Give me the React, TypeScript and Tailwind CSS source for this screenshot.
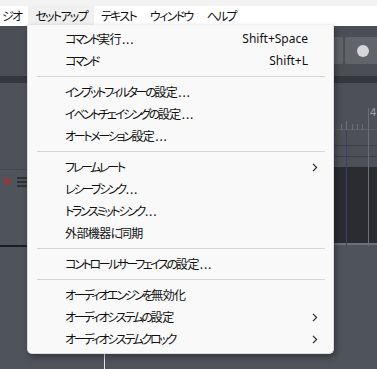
import React from "react";

const JP = 'font-["Yu_Gothic_UI","Noto_Sans_CJK_JP",sans-serif] [font-feature-settings:"palt"]';

type Item =
  | { kind: "item"; label: string; shortcut?: string; sub?: boolean }
  | { kind: "sep" };

const MENU: Item[] = [
  { kind: "item", label: "コマンド実行...", shortcut: "Shift+Space" },
  { kind: "item", label: "コマンド", shortcut: "Shift+L" },
  { kind: "sep" },
  { kind: "item", label: "インプットフィルターの設定..." },
  { kind: "item", label: "イベントチェイシングの設定..." },
  { kind: "item", label: "オートメーション設定..." },
  { kind: "sep" },
  { kind: "item", label: "フレームレート", sub: true },
  { kind: "item", label: "レシーブシンク..." },
  { kind: "item", label: "トランスミットシンク..." },
  { kind: "item", label: "外部機器に同期" },
  { kind: "sep" },
  { kind: "item", label: "コントロールサーフェイスの設定..." },
  { kind: "sep" },
  { kind: "item", label: "オーディオエンジンを無効化" },
  { kind: "item", label: "オーディオシステムの設定", sub: true },
  { kind: "item", label: "オーディオシステムクロック", sub: true },
];

const TOP = ["ジオ", "セットアップ", "テキスト", "ウィンドウ", "ヘルプ"];

// kana are set tight, kanji near full width, dots a little open
function Label({ text, kana }: { text: string; kana: string }) {
  const runs = text.match(/[\u4e00-\u9fff]+|\.+|[^\u4e00-\u9fff.]+/g) ?? [];
  return (
    <>
      {runs.map((r, i) => {
        const cls = /[\u4e00-\u9fff]/.test(r)
          ? "tracking-[-0.6px]"
          : r.startsWith(".")
          ? "tracking-[0.8px] pl-[1px]"
          : kana;
        return (
          <span key={i} className={cls}>
            {r}
          </span>
        );
      })}
    </>
  );
}

function Chevron() {
  return (
    <svg width="6" height="9" viewBox="0 0 6 9" className="block">
      <polyline points="1,0.8 4.6,4.5 1,8.2" fill="none" stroke="#2b2b2b" strokeWidth="1.2" />
    </svg>
  );
}

export default function App() {
  return (
    <div className="relative w-[377px] h-[369px] overflow-hidden bg-[#4f535a]">
      {/* menu bar */}
      <div className="h-[26px] bg-white border-t-[6px] border-[#f3f3f3] flex items-stretch">
        {TOP.map((t, i) => (
          <div
            key={t}
            className={`${JP} text-[12px] text-[#111] flex items-center px-[7px] ${i === 0 ? "ml-[-5px]" : ""} ${
              i === 1 ? "bg-[#f0f0f0]" : ""
            }`}
          >
            <span className="tracking-[-1.7px]">{t}</span>
          </div>
        ))}
      </div>

      {/* toolbar */}
      <div className="h-[50px] bg-[#4b4e55] flex items-start justify-end pt-[11px]">
        <div className="w-[20px] h-[27px] bg-[#61646b] rounded-[2px] mr-[2px]" />
        <div className="w-[32px] h-[27px] bg-[#61646b] rounded-l-[2px] flex items-center pl-[12px]">
          <div className="w-[12px] h-[12px] rounded-full bg-[#d6d6d6]" />
        </div>
      </div>
      <div className="h-[7px] bg-[#35373c]" />

      {/* ruler + tracks */}
      <div className="flex">
        <div className="w-[200px] flex flex-col">
          <div className="h-[87px] bg-[#4e5158] border-b border-[#44474d]" />
          <div className="h-[75px] bg-[#4f535a] relative">
            <div className="absolute left-[4px] top-[8px] w-[7px] h-[7px] rounded-full bg-[#8e3b40]" />
            <div className="absolute left-[17px] top-[7px] w-[10px] flex flex-col gap-[2px]">
              <div className="h-[2px] bg-[#2f3136]" />
              <div className="h-[2px] bg-[#2f3136]" />
              <div className="h-[2px] bg-[#2f3136]" />
            </div>
          </div>
          <div className="h-[2px] bg-[#1d1e21]" />
        </div>
        <div className="flex-1 flex flex-col relative">
          <div className="h-[47px] bg-[#4d5057] border-b border-[#5d6067]" />
          <div className="h-[16px] bg-[#4d5057] border-b border-[#3d4046]" />
          <div className="h-[11px] bg-[#4d5057] border-b border-[#3d4046]" />
          <div className="h-[10px] bg-[#4d5057]" />
          <div className="h-[76px] bg-[#2b2c31]" />
          <div className="h-[2px] bg-[#6d7077]" />
          <span className="absolute left-[170px] top-[24px] text-[11px] leading-none text-[#9fa3ab] font-['Liberation_Sans',sans-serif]">
            4
          </span>
          <div className="absolute left-[168px] top-[25px] w-px h-[138px] bg-[#6b6e75]" />
          <div className="absolute left-[146px] top-[40px] w-px h-[123px] bg-[#3b3f66]" />
          <div className="absolute left-[146px] top-[38px] w-px h-[9px] bg-[#6b6e75]" />
          <div className="absolute left-[141px] top-[41px] w-px h-[6px] bg-[#6b6e75]" />
          <div className="absolute left-[152px] top-[41px] w-px h-[6px] bg-[#6b6e75]" />
          <div className="absolute left-[157px] top-[41px] w-px h-[6px] bg-[#6b6e75]" />
          <div className="absolute left-[162px] top-[41px] w-px h-[6px] bg-[#6b6e75]" />
        </div>
      </div>

      {/* playhead */}
      <div className="absolute left-[104px] top-[246px] bottom-0 w-px bg-[#e8e8e8]" />

      {/* dropdown menu */}
      <div className="absolute left-[27px] top-[25px] w-[307px] bg-[#f9f9f9] rounded-b-[5px] border border-t-0 border-[#dcdcdc] shadow-[2px_3px_6px_rgba(0,0,0,0.35)] py-[3px]">
        {MENU.map((m, i) =>
          m.kind === "sep" ? (
            <div key={i} className="h-[9px] flex items-center pl-[9px] pr-[8px]">
              <div className="h-px w-full bg-[#d6d6d6]" />
            </div>
          ) : (
            <div key={i} className="h-[22px] flex items-center pl-[37px] pr-[15px]">
              <span className={`${JP} text-[12px] text-[#0f0f0f] flex-1 whitespace-nowrap`}>
                <Label text={m.label} kana="tracking-[-2.3px]" />
              </span>
              {m.shortcut && (
                <span className="font-['Noto_Sans',sans-serif] text-[12px] text-[#111] mr-[10px]">{m.shortcut}</span>
              )}
              {m.sub && <Chevron />}
            </div>
          )
        )}
      </div>
    </div>
  );
}
